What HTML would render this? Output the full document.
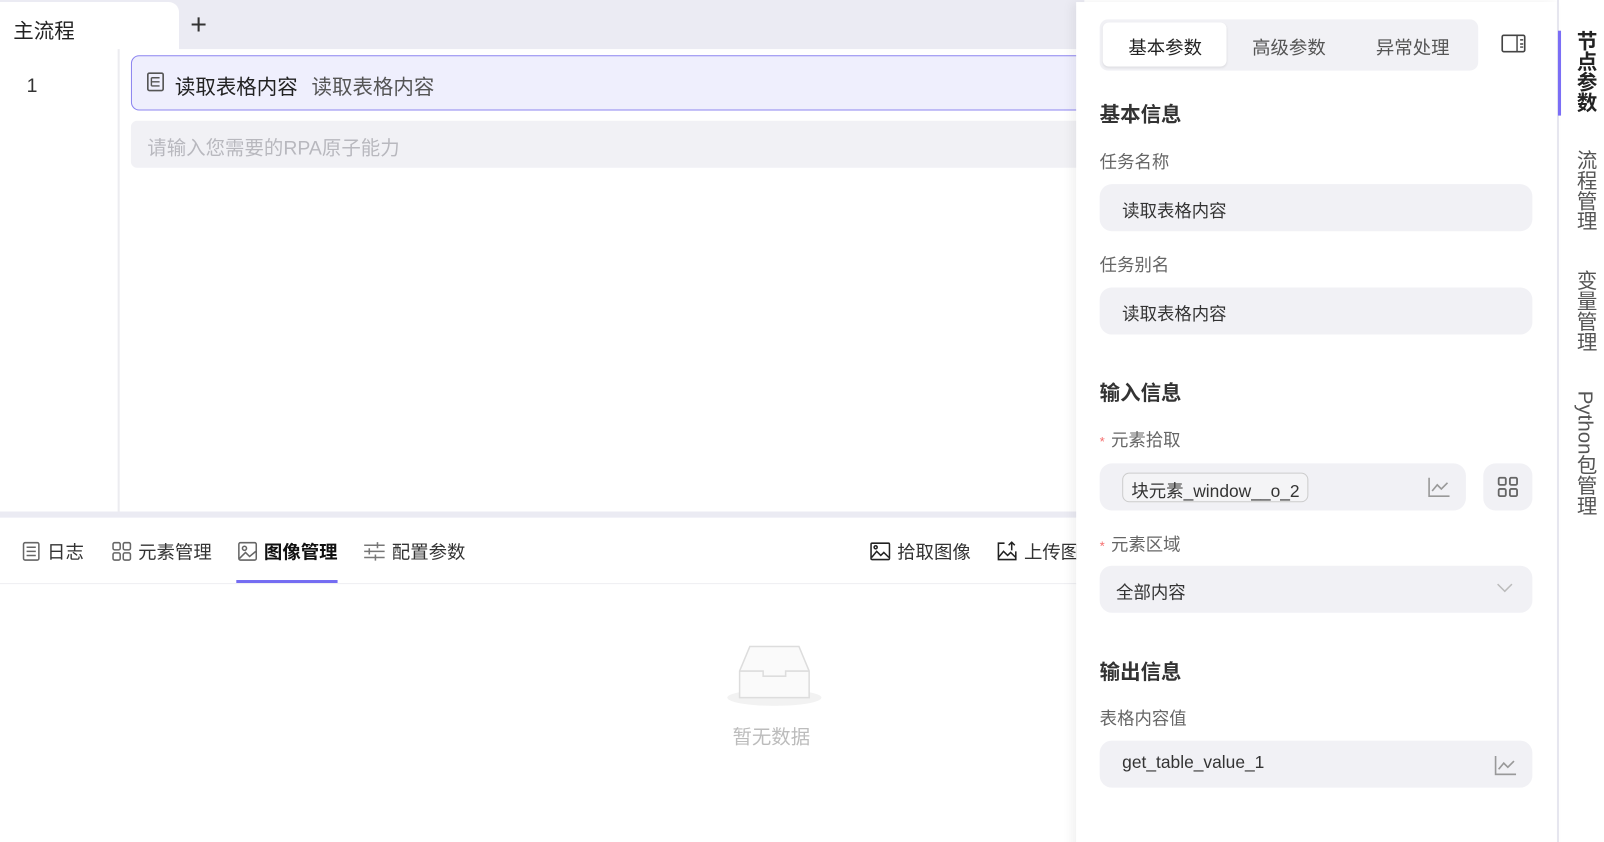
<!DOCTYPE html>
<html><head><meta charset="utf-8"><style>
*{box-sizing:border-box;margin:0;padding:0}
html,body{width:1604px;height:842px;overflow:hidden;background:#fff}
#w{width:1568px;height:823px;position:relative;transform:scale(1.02296);transform-origin:0 0;font-family:"Liberation Sans","Noto Sans CJK SC",sans-serif;color:#222}
.abs{position:absolute}
.topbar{left:0;top:0;width:1060px;height:50px;background:#ebebf3}
.tab{left:0;top:2px;width:175px;height:48px;background:#fff;border-radius:0 10px 0 0;font-size:20px;padding:12px 13px}
.plus{left:186px;top:8px;font-size:28px;color:#333;font-weight:300}
.main{left:0;top:48px;width:1060px;height:452px;background:#fff}
.gut{left:115px;top:48px;width:2px;height:452px;background:#ececf0}
.ln{left:26px;top:74px;font-size:19px;color:#333}
.node{left:128px;top:54px;width:940px;height:54px;background:#efeffd;border:1px solid #8c84f0;border-radius:8px;font-size:20px;padding:14px 0 0 42px}
.node .sub{color:#555;margin-left:8px}
.inp{left:128px;top:118px;width:940px;height:46px;background:#f1f1f5;border-radius:6px;font-size:19px;color:#b8b8be;padding:12px 16px}
.divi{left:0;top:500px;width:1060px;height:6px;background:#ebebf3}
.btabs{top:526px;font-size:18px;color:#333;display:flex;align-items:center;gap:6px}
.btabs svg{stroke:#666;fill:none;stroke-width:1.5}
.uline{left:231px;top:567px;width:99px;height:3px;background:#746cf2}
.bl{left:0;top:570px;width:1060px;height:1px;background:#eeeef2}
.empty{left:716px;top:706px;font-size:19px;color:#bcbcbc}
.panel{left:1052px;top:2px;width:470px;height:840px;background:#fff;box-shadow:-4px 0 10px rgba(0,0,0,.06)}
.seg{left:1075px;top:19px;width:370px;height:50px;background:#f1f1f5;border-radius:8px}
.segA{left:1078px;top:22px;width:121px;height:43px;background:#fff;border-radius:6px;box-shadow:0 1px 2px rgba(0,0,0,.08)}
.st{top:33px;font-size:18px;color:#555}
h3{position:absolute;font-size:20px;font-weight:bold;color:#333}
.lb{position:absolute;font-size:17px;color:#666}
.fld{position:absolute;background:#f1f1f5;border-radius:12px;font-size:17px;color:#333}
.star{color:#f56c6c;font-size:13px;margin-right:6px}
.vs{left:1522px;top:0;width:2px;height:842px;background:#e6e6ef}
.ind{left:1523px;top:30px;width:3px;height:83px;background:#7b6ef6}
.vt{writing-mode:vertical-rl;font-size:20px;left:1537px;color:#555;line-height:24px}
</style></head><body><div id="w">
<div class="abs topbar"></div>
<div class="abs tab">主流程</div>
<div class="abs plus">+</div>
<div class="abs main"></div>
<div class="abs gut"></div>
<div class="abs ln">1</div>
<div class="abs node">读取表格内容<span class="sub">&nbsp;读取表格内容</span></div>
<svg class="abs" style="left:143px;top:70px" width="18" height="20" viewBox="0 0 18 20"><rect x="1.5" y="1.5" width="15" height="17" rx="1.5" fill="none" stroke="#555" stroke-width="1.6"/><path d="M5 6h8M5 10h8M5 14h8M5 6v8" stroke="#555" stroke-width="1.4"/></svg>
<div class="abs inp">请输入您需要的RPA原子能力</div>
<div class="abs divi"></div>

<div class="abs btabs" style="left:21px"><svg width="19" height="20"><rect x="2" y="1.5" width="15" height="17" rx="1.5"/><path d="M5 6h9M5 10h9M5 14h9"/></svg>日志</div>
<div class="abs btabs" style="left:109px"><svg width="20" height="20"><rect x="1.5" y="1.5" width="7" height="7" rx="1.5"/><rect x="11.5" y="1.5" width="7" height="7" rx="1.5"/><rect x="1.5" y="11.5" width="7" height="7" rx="1.5"/><rect x="11.5" y="11.5" width="7" height="7" rx="1.5"/></svg>元素管理</div>
<div class="abs btabs" style="left:232px;font-weight:bold;color:#111"><svg width="20" height="20"><rect x="1.5" y="1.5" width="17" height="17" rx="1.5"/><circle cx="7" cy="7" r="2"/><path d="M2 17l6-6 4 4 6-5"/></svg>图像管理</div>
<div class="abs btabs" style="left:355px"><svg width="22" height="20"><path d="M1 4h20M1 10h20M1 16h20M14 1v6M6 7v6M12 13v6" stroke="#777"/></svg>配置参数</div>
<div class="abs btabs" style="left:850px"><svg width="21" height="20" style="stroke:#222"><rect x="1.5" y="2" width="18" height="16" rx="1"/><path d="M2 16l5-6 4 4 3-3 5 5"/><circle cx="6" cy="6" r="1.5"/></svg>拾取图像</div>
<div class="abs btabs" style="left:974px"><svg width="21" height="20" style="stroke:#222"><path d="M8 2H2v16h17v-8M2 16l5-6 4 4 3-3 5 5M15 9V1M12 4l3-3 3 3"/></svg>上传图</div>
<div class="abs uline"></div>
<div class="abs bl"></div>
<svg class="abs" style="left:708px;top:628px" width="98" height="64" viewBox="0 0 98 64"><ellipse cx="49" cy="54" rx="46" ry="8" fill="#f2f2f2"/><path d="M15 28l10-24h48l10 24v26H15z" fill="#fafafa" stroke="#ddd" stroke-width="1.5"/><path d="M15 28h23v5h22v-5h23" fill="none" stroke="#ddd" stroke-width="1.5"/></svg>
<div class="abs empty">暂无数据</div>

<div class="abs panel"></div>
<div class="abs seg"></div>
<div class="abs segA"></div>
<div class="abs st" style="left:1103px;color:#222">基本参数</div>
<div class="abs st" style="left:1224px">高级参数</div>
<div class="abs st" style="left:1345px">异常处理</div>
<svg class="abs" style="left:1467px;top:33px" width="26" height="20"><rect x="1.5" y="1.5" width="22" height="16" rx="1.5" fill="none" stroke="#444" stroke-width="1.6"/><path d="M16 2v15M19 6h3M19 10h3M19 13h3" stroke="#444" stroke-width="1.4"/></svg>

<h3 style="left:1075px;top:96px">基本信息</h3>
<div class="lb" style="left:1075px;top:144px">任务名称</div>
<div class="fld" style="left:1075px;top:180px;width:423px;height:46px;padding:12px 22px">读取表格内容</div>
<div class="lb" style="left:1075px;top:245px">任务别名</div>
<div class="fld" style="left:1075px;top:281px;width:423px;height:46px;padding:12px 22px">读取表格内容</div>
<h3 style="left:1075px;top:368px">输入信息</h3>
<div class="lb" style="left:1075px;top:416px"><span class="star">*</span>元素拾取</div>
<div class="fld" style="left:1075px;top:453px;width:358px;height:46px"></div>
<div class="abs" style="left:1097px;top:462px;height:29px;border:1px solid #ccc;border-radius:7px;padding:3px 8px;font-size:17px;color:#333;background:#f4f4f6">块元素_window__o_2</div>
<svg class="abs" style="left:1396px;top:466px" width="22" height="20" fill="none" stroke="#999" stroke-width="1.6"><path d="M1 1v18h20M4 14l5-6 4 4 6-6"/></svg>
<div class="fld" style="left:1450px;top:453px;width:48px;height:46px"></div>
<svg class="abs" style="left:1464px;top:466px" width="20" height="20" fill="none" stroke="#666" stroke-width="1.8"><rect x="1" y="1" width="7" height="7" rx="1.5"/><rect x="12" y="1" width="7" height="7" rx="1.5"/><rect x="1" y="12" width="7" height="7" rx="1.5"/><rect x="12" y="12" width="7" height="7" rx="1.5"/></svg>
<div class="lb" style="left:1075px;top:518px"><span class="star">*</span>元素区域</div>
<div class="fld" style="left:1075px;top:553px;width:423px;height:46px;padding:12px 16px">全部内容</div>
<svg class="abs" style="left:1463px;top:570px" width="16" height="10" fill="none" stroke="#bbb" stroke-width="1.5"><path d="M1 1l7 7 7-7"/></svg>
<h3 style="left:1075px;top:641px">输出信息</h3>
<div class="lb" style="left:1075px;top:688px">表格内容值</div>
<div class="fld" style="left:1075px;top:724px;width:423px;height:46px;padding:12px 22px">get_table_value_1</div>
<svg class="abs" style="left:1461px;top:738px" width="22" height="20" fill="none" stroke="#999" stroke-width="1.6"><path d="M1 1v18h20M4 14l5-6 4 4 6-6"/></svg>

<div class="abs vs"></div>
<div class="abs ind"></div>
<div class="abs vt" style="top:30px;font-weight:bold;color:#222">节点参数</div>
<div class="abs vt" style="top:146px">流程管理</div>
<div class="abs vt" style="top:264px">变量管理</div>
<div class="abs vt" style="top:382px">Python包管理</div>
</div></body></html>
